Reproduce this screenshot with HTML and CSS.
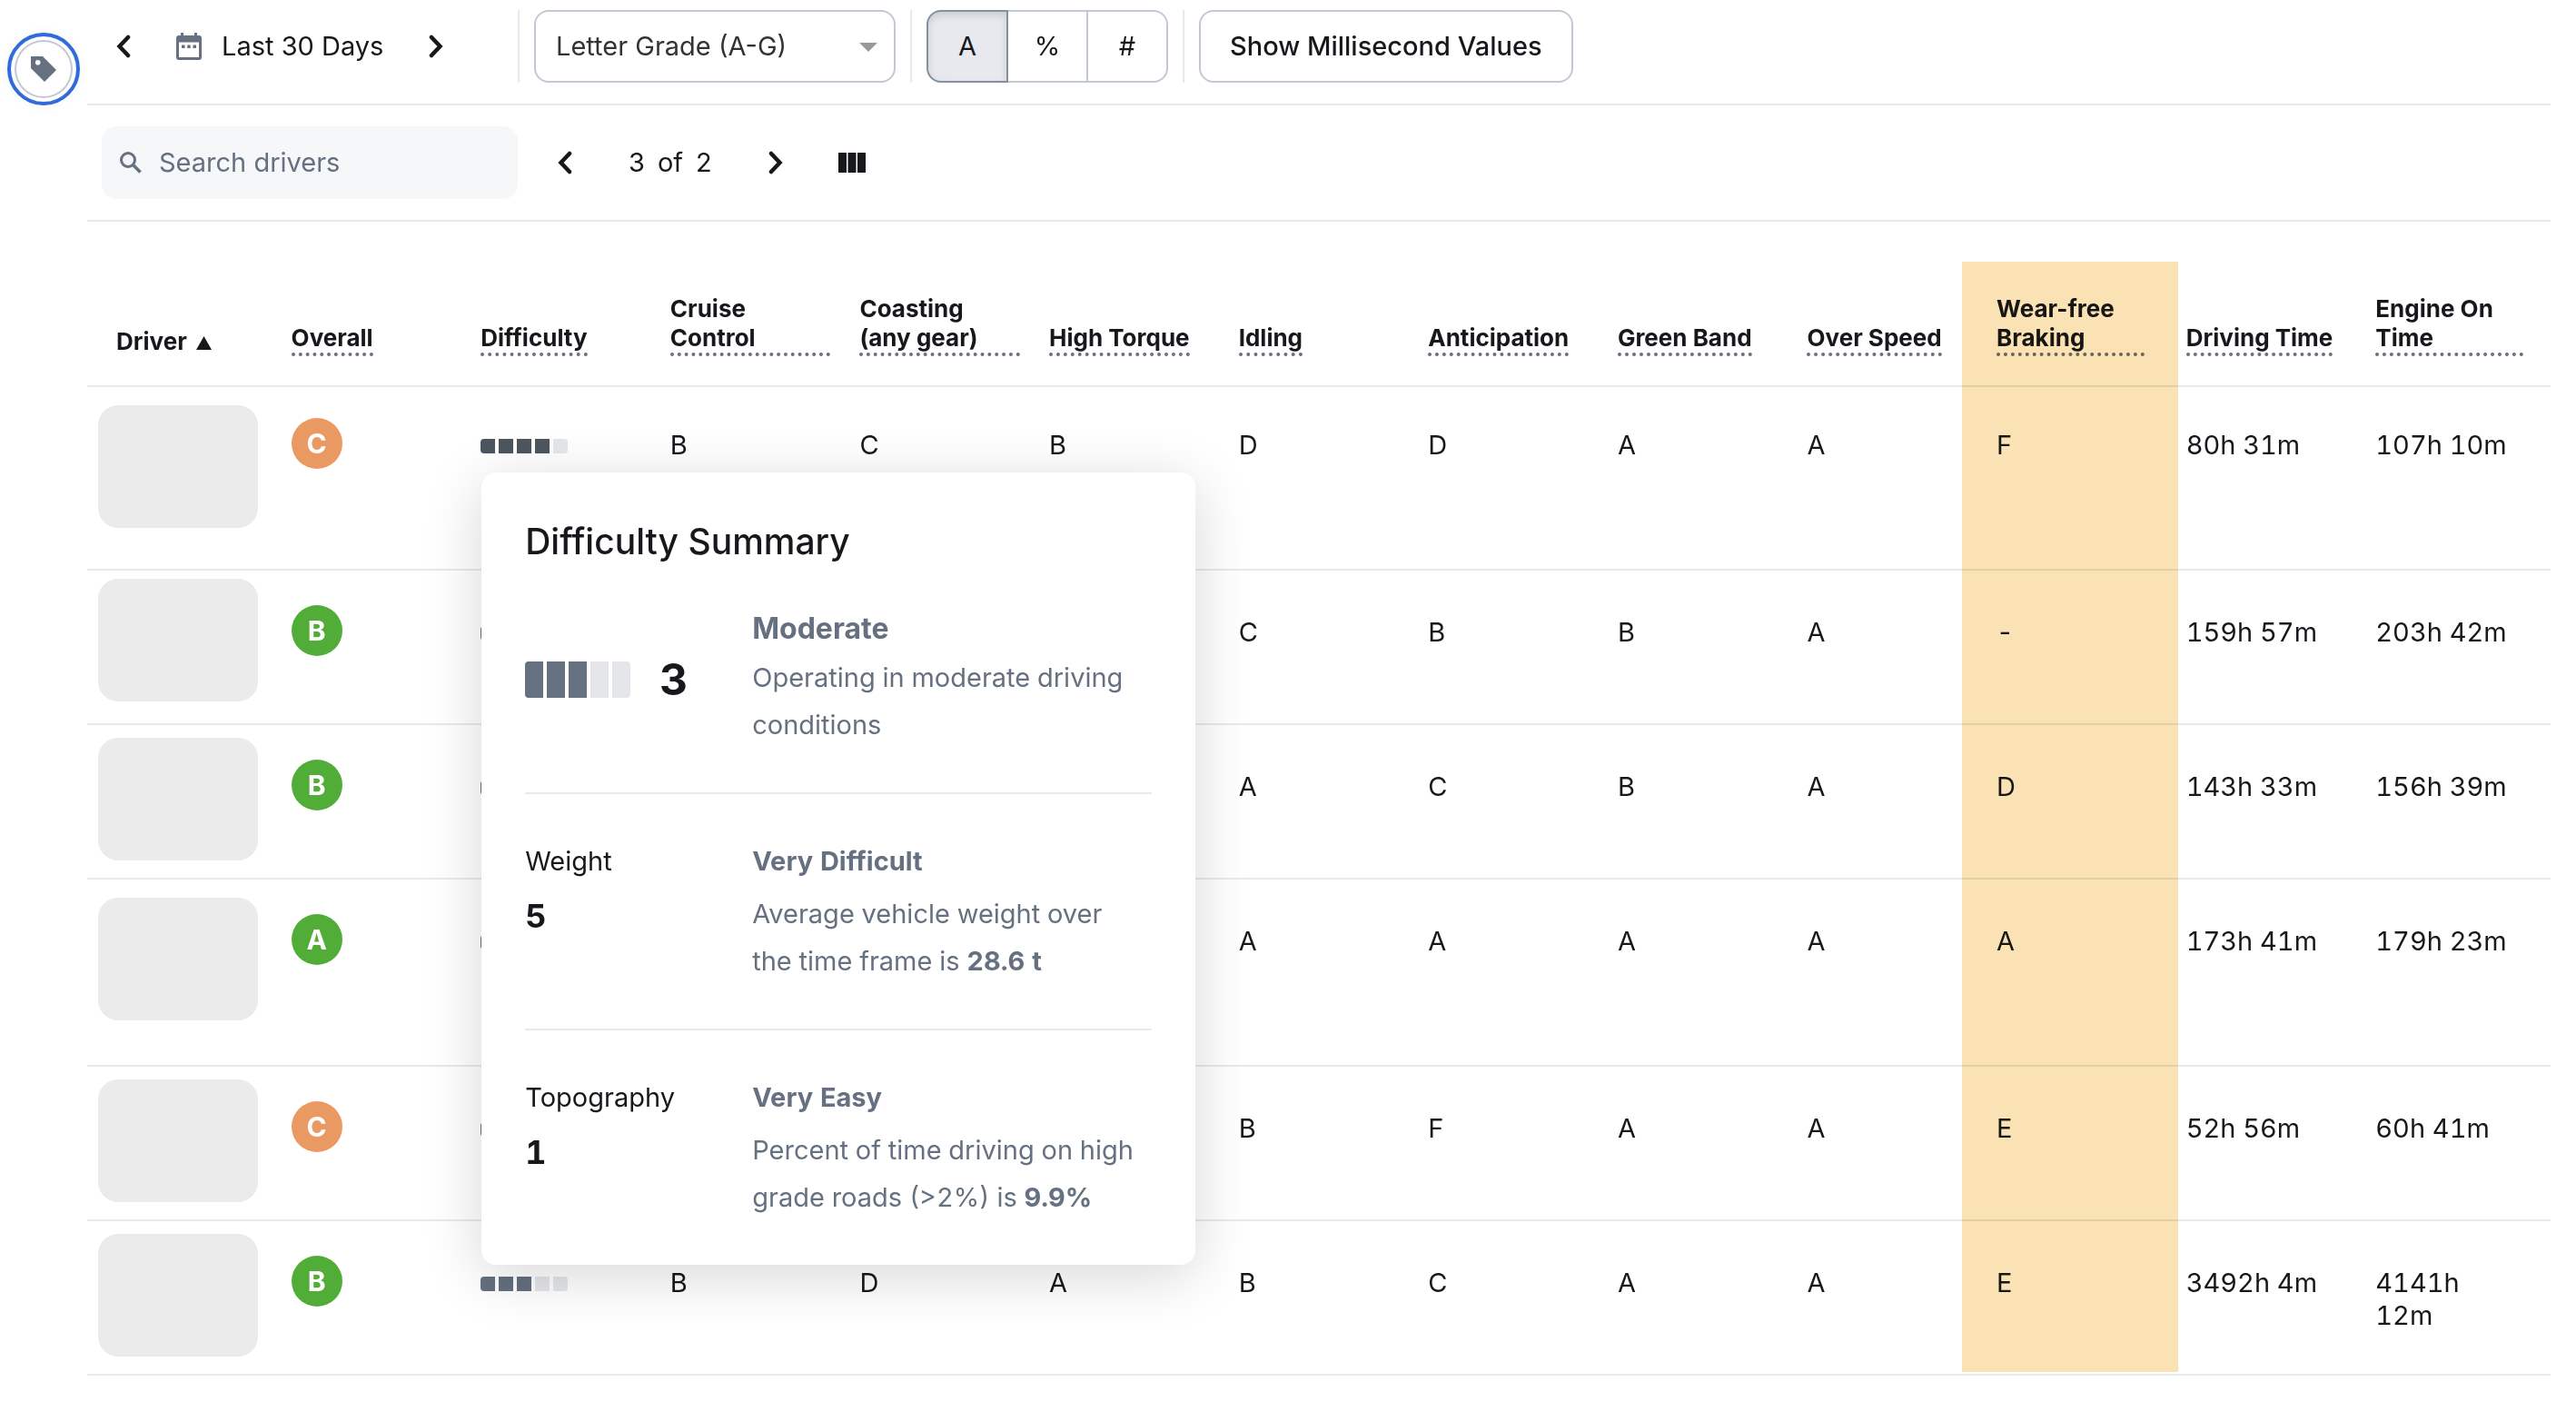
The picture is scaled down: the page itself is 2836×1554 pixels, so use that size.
FILE: index.html
```
<!DOCTYPE html>
<html lang="en">

<head>
    <meta charset="UTF-8">
    <meta name="viewport" content="width=device-width, initial-scale=1.0">
    <title>Driver Performance</title>
    <link rel="stylesheet" href="styles.css">
</head>

<body>
    <aside class="rail">
        <button class="tag-btn" type="button" aria-label="Tags">
            <svg width="28" height="28" viewBox="0 0 28 28">
                <path fill="#657080" fill-rule="evenodd" d="M0 0h13l15 15-13 13L0 13zM7.700 4a2.800 2.800 0 1 0 0 5.600 2.800 2.800 0 0 0 0-5.600z" />
            </svg>
        </button>
    </aside>

    <main class="main">
        <div class="toolbar">
            <div class="date-nav">
                <button class="icon-btn" type="button" aria-label="Previous period">
                    <svg width="16" height="26" viewBox="0 0 16 26"><path class="chevron" d="M13 3L3.500 13 13 23" /></svg>
                </button>
                <button class="date-btn" type="button">
                    <svg width="28" height="30" viewBox="0 0 28 30">
                        <path fill="#657080" fill-rule="evenodd" d="M5 0h3v3h12V0h3v3h2a3 3 0 0 1 3 3v21a3 3 0 0 1-3 3H3a3 3 0 0 1-3-3V6a3 3 0 0 1 3-3h2zM3 10.500V27h22V10.500z" />
                        <path fill="#657080" d="M6 13.500h3.500V17H6zM12.200 13.500h3.500V17h-3.500zM18.500 13.500H22V17h-3.500z" />
                    </svg>
                    Last 30 Days
                </button>
                <button class="icon-btn" type="button" aria-label="Next period">
                    <svg width="16" height="26" viewBox="0 0 16 26"><path class="chevron" d="M3 3l9.500 10L3 23" /></svg>
                </button>
            </div>
            <span class="divider"></span>
            <div class="select-box">
                <select aria-label="Score format">
                    <option>Letter Grade (A-G)</option>
                </select>
                <svg class="caret" width="20" height="10" viewBox="0 0 20 10"><path fill="#999" d="M0 0h20L10 10z" /></svg>
            </div>
            <span class="divider"></span>
            <div class="btn-group">
                <button class="active" type="button">A</button>
                <button type="button">%</button>
                <button type="button">#</button>
            </div>
            <span class="divider"></span>
            <button class="btn" type="button">Show Millisecond Values</button>
        </div>

        <div class="toolbar search-bar">
            <label class="search">
                <svg width="24" height="24" viewBox="0 0 24 24">
                    <circle cx="9" cy="9" r="7.500" fill="none" stroke="#657080" stroke-width="3" />
                    <path d="M14.500 14.500L22.500 22.500" stroke="#657080" stroke-width="3.500" />
                </svg>
                <input type="text" placeholder="Search drivers" aria-label="Search drivers">
            </label>
            <div class="pager">
                <button class="icon-btn" type="button" aria-label="Previous page">
                    <svg width="16" height="26" viewBox="0 0 16 26"><path class="chevron" d="M13 3L3.500 13 13 23" /></svg>
                </button>
                <div class="pages"><span>3</span><span>of</span><span>2</span></div>
                <button class="icon-btn" type="button" aria-label="Next page">
                    <svg width="16" height="26" viewBox="0 0 16 26"><path class="chevron" d="M3 3l9.500 10L3 23" /></svg>
                </button>
            </div>
            <button class="icon-btn" type="button" aria-label="Columns">
                <svg width="30" height="22" viewBox="0 0 30 22"><path fill="#17181c" d="M0 0h9v22H0zM10.500 0h9v22h-9zM21 0h9v22h-9z" /></svg>
            </button>
        </div>

        <div class="table-box">
            <table>
                <thead>
                    <tr>
                        <th class="driver">Driver <svg width="17" height="15" viewBox="0 0 17 15"><path fill="#17181c" d="M8.500 0L17 15H0z" /></svg></th>
                        <th><span>Overall</span></th>
                        <th><span>Difficulty</span></th>
                        <th><span>Cruise Control</span></th>
                        <th><span>Coasting (any gear)</span></th>
                        <th><span>High Torque</span></th>
                        <th><span>Idling</span></th>
                        <th><span>Anticipation</span></th>
                        <th><span>Green Band</span></th>
                        <th><span>Over Speed</span></th>
                        <th class="narrow"><span>Wear-free Braking</span></th>
                        <th class="narrow"><span>Driving Time</span></th>
                        <th class="narrow"><span>Engine On Time</span></th>
                    </tr>
                </thead>
                <tbody>
                    <tr class="tall">
                        <td class="driver"><div class="tile tile-low"></div></td>
                        <td><span class="grade orange">C</span></td>
                        <td class="difficulty">
                            <div class="bars dark"><i class="on"></i><i class="on"></i><i class="on"></i><i class="on"></i><i></i></div>
                            <div class="popover">
                                <h2>Difficulty Summary</h2>
                                <div class="summary">
                                    <div class="score">
                                        <div class="bars big"><i class="on"></i><i class="on"></i><i class="on"></i><i></i><i></i></div>
                                        <b>3</b>
                                    </div>
                                    <div>
                                        <h3>Moderate</h3>
                                        <p>Operating in moderate driving conditions</p>
                                    </div>
                                </div>
                                <div class="factor">
                                    <div>
                                        <h4>Weight</h4>
                                        <b class="value">5</b>
                                    </div>
                                    <div>
                                        <h5>Very Difficult</h5>
                                        <p>Average vehicle weight over the time frame is <b>28.6 t</b></p>
                                    </div>
                                </div>
                                <div class="factor">
                                    <div>
                                        <h4>Topography</h4>
                                        <b class="value">1</b>
                                    </div>
                                    <div>
                                        <h5>Very Easy</h5>
                                        <p>Percent of time driving on high grade roads (&gt;2%) is <b>9.9%</b></p>
                                    </div>
                                </div>
                            </div>
                        </td>
                        <td>B</td>
                        <td>C</td>
                        <td>B</td>
                        <td>D</td>
                        <td>D</td>
                        <td>A</td>
                        <td>A</td>
                        <td>F</td>
                        <td>80h 31m</td>
                        <td>107h 10m</td>
                    </tr>
                    <tr>
                        <td class="driver"><div class="tile tile-high"></div></td>
                        <td><span class="grade green">B</span></td>
                        <td><div class="bars"><i class="on"></i><i class="on"></i><i class="on"></i><i></i><i></i></div></td>
                        <td></td>
                        <td></td>
                        <td></td>
                        <td>C</td>
                        <td>B</td>
                        <td>B</td>
                        <td>A</td>
                        <td>-</td>
                        <td>159h 57m</td>
                        <td>203h 42m</td>
                    </tr>
                    <tr>
                        <td class="driver"><div class="tile"></div></td>
                        <td><span class="grade green">B</span></td>
                        <td><div class="bars"><i class="on"></i><i class="on"></i><i class="on"></i><i></i><i></i></div></td>
                        <td></td>
                        <td></td>
                        <td></td>
                        <td>A</td>
                        <td>C</td>
                        <td>B</td>
                        <td>A</td>
                        <td>D</td>
                        <td>143h 33m</td>
                        <td>156h 39m</td>
                    </tr>
                    <tr class="tall">
                        <td class="driver"><div class="tile tile-low"></div></td>
                        <td><span class="grade green">A</span></td>
                        <td><div class="bars"><i class="on"></i><i class="on"></i><i class="on"></i><i></i><i></i></div></td>
                        <td></td>
                        <td></td>
                        <td></td>
                        <td>A</td>
                        <td>A</td>
                        <td>A</td>
                        <td>A</td>
                        <td>A</td>
                        <td>173h 41m</td>
                        <td>179h 23m</td>
                    </tr>
                    <tr>
                        <td class="driver"><div class="tile"></div></td>
                        <td><span class="grade orange">C</span></td>
                        <td><div class="bars"><i class="on"></i><i class="on"></i><i class="on"></i><i></i><i></i></div></td>
                        <td></td>
                        <td></td>
                        <td></td>
                        <td>B</td>
                        <td>F</td>
                        <td>A</td>
                        <td>A</td>
                        <td>E</td>
                        <td>52h 56m</td>
                        <td>60h 41m</td>
                    </tr>
                    <tr>
                        <td class="driver"><div class="tile"></div></td>
                        <td><span class="grade green">B</span></td>
                        <td><div class="bars"><i class="on"></i><i class="on"></i><i class="on"></i><i></i><i></i></div></td>
                        <td>B</td>
                        <td>D</td>
                        <td>A</td>
                        <td>B</td>
                        <td>C</td>
                        <td>A</td>
                        <td>A</td>
                        <td>E</td>
                        <td>3492h 4m</td>
                        <td>4141h 12m</td>
                    </tr>
                </tbody>
            </table>
            <div class="highlight"></div>
        </div>
    </main>
</body>

</html>
```
FILE: styles.css
```
* {
    box-sizing: border-box;
    margin: 0;
    padding: 0;
}

body {
    display: flex;
    background: #fff;
    color: #17181c;
    font-family: Inter, "Liberation Sans", sans-serif;
    font-size: 29px;
    line-height: 36px;
}

button,
input,
select {
    font: inherit;
    color: inherit;
    background: none;
    border: none;
}

button {
    cursor: pointer;
}

svg {
    display: block;
    flex-shrink: 0;
}

.chevron {
    fill: none;
    stroke: #17181c;
    stroke-width: 4.5;
    stroke-linecap: round;
}

/* left rail */

.rail {
    flex: 0 0 96px;
    padding: 36px 8px;
}

.tag-btn {
    display: flex;
    align-items: center;
    justify-content: center;
    width: 80px;
    height: 80px;
    border: 4px solid #306bdb;
    border-radius: 50%;
    box-shadow: inset 0 0 0 4px #fff, inset 0 0 0 6px #c3c9d3, 0 0 16px rgba(0, 0, 0, 0.04);
}

.main {
    flex: 1;
    min-width: 0;
    margin-right: 28px;
}

/* toolbars */

.toolbar {
    display: flex;
    align-items: center;
    gap: 16px;
    padding: 11px 0 23px;
    border-bottom: 2px solid #e8e9ee;
}

.date-nav {
    display: flex;
    align-items: center;
    gap: 34px;
    width: 474px;
    margin-right: -16px;
    padding-left: 16px;
}

.date-btn {
    display: flex;
    align-items: center;
    gap: 22px;
    white-space: nowrap;
}

.icon-btn {
    display: flex;
    align-items: center;
    justify-content: center;
    width: 48px;
    height: 48px;
}

.divider {
    width: 2px;
    height: 80px;
    background: #e8e9ee;
}

.select-box {
    position: relative;
    width: 398px;
}

.select-box select {
    appearance: none;
    width: 100%;
    height: 80px;
    padding: 0 22px;
    border: 2px solid #c3c9d3;
    border-radius: 16px;
    color: #333;
}

.caret {
    position: absolute;
    top: 36px;
    right: 20px;
    pointer-events: none;
}

.btn,
.btn-group button {
    height: 80px;
    border: 2px solid #c3c9d3;
}

.btn {
    padding: 0 32px;
    border-radius: 16px;
    font-weight: 500;
}

.btn-group {
    display: flex;
}

.btn-group button {
    width: 90px;
    margin-left: -2px;
}

.btn-group button:first-child {
    margin-left: 0;
    border-radius: 16px 0 0 16px;
}

.btn-group button:last-child {
    border-radius: 0 16px 16px 0;
}

.btn-group .active {
    z-index: 1;
    background: #e8e9ee;
    border-color: #8290a0;
    box-shadow: inset 0 4px 8px rgba(0, 0, 0, 0.12);
}

.search-bar {
    gap: 28px;
    padding: 23px 0 23px 16px;
}

.search {
    display: flex;
    align-items: center;
    gap: 19px;
    width: 458px;
    height: 80px;
    padding: 0 20px;
    border-radius: 16px;
    background: #f5f7f9;
}

.search input {
    flex: 1;
    min-width: 0;
    outline: none;
}

.search input::placeholder {
    color: #657080;
}

.pager {
    display: flex;
    align-items: center;
    gap: 46px;
    margin-right: 8px;
}

.pages {
    display: flex;
    gap: 14px;
}

/* table */

.table-box {
    position: relative;
}

table {
    width: 100%;
    table-layout: fixed;
    border-collapse: separate;
    border-spacing: 0;
}

th {
    height: 182px;
    padding: 0 16px 32px;
    border-bottom: 2px solid #e8e9ee;
    font-size: 26px;
    line-height: 32px;
    text-align: left;
    vertical-align: bottom;
}

th span {
    display: block;
    width: fit-content;
    border-bottom: 4px dotted #657080;
}

th.driver {
    padding-left: 32px;
}

th.narrow {
    padding-right: 30px;
}

th.driver svg {
    display: inline-block;
    margin-left: 4px;
}

tbody tr {
    --cell-top: 50px;
}

tbody tr:first-child {
    --cell-top: 46px;
}

td {
    height: 170px;
    padding: var(--cell-top) 32px 0 16px;
    border-bottom: 2px solid #e8e9ee;
    font-variant-numeric: tabular-nums;
    vertical-align: top;
}

.tall td {
    height: calc(156px + var(--cell-top));
}

td.driver {
    padding: 14px 12px 0;
}

.tile {
    width: 176px;
    height: 135px;
    border-radius: 22px;
    background: #ebebeb;
}

.tile-low {
    margin-top: 6px;
}

.tile-high {
    margin-top: -5px;
}

.grade {
    display: flex;
    align-items: center;
    justify-content: center;
    width: 56px;
    height: 56px;
    margin-top: -12px;
    border-radius: 50%;
    color: #fff;
    font-size: 30px;
    font-weight: 700;
}

.green {
    background: #51ad38;
}

.orange {
    background: #eb9962;
}

.bars {
    display: flex;
    gap: 4px;
    margin-top: 11px;
}

.bars i {
    width: 16px;
    height: 16px;
    background: #e4e6ea;
}

.bars i:first-child {
    border-radius: 4px 0 0 4px;
}

.bars i:last-child {
    border-radius: 0 4px 4px 0;
}

.bars .on {
    background: #657080;
}

.dark .on {
    background: #4d555f;
}

.highlight {
    position: absolute;
    top: 44px;
    bottom: 4px;
    left: 76.1%;
    width: 8.8%;
    background: #fbe2b4;
    mix-blend-mode: multiply;
}

/* difficulty popover */

.difficulty {
    position: relative;
}

.popover {
    position: absolute;
    z-index: 2;
    top: 94px;
    left: 17px;
    width: 786px;
    padding: 52px 48px 0;
    border-radius: 16px;
    background: #fff;
    box-shadow: 0 12px 64px rgba(0, 0, 0, 0.16);
}

.popover h2 {
    margin-bottom: 52px;
    font-size: 39px;
    font-weight: 500;
    line-height: 48px;
}

.popover h3,
.popover h4,
.popover h5 {
    margin-bottom: 12px;
    line-height: 40px;
}

.popover h3 {
    color: #657080;
    font-size: 32px;
    margin-bottom: 8px;
}

.popover h4 {
    font-size: 29px;
    font-weight: 400;
}

.popover h5 {
    color: #657080;
    font-size: 29px;
}

.popover p {
    padding-right: 12px;
    color: #657080;
    line-height: 52px;
}

.summary,
.factor {
    display: grid;
    grid-template-columns: 250px 1fr;
    padding-bottom: 48px;
}

.factor {
    padding-top: 54px;
    border-top: 2px solid #e8e9ee;
}

.score {
    display: flex;
    align-items: center;
    gap: 32px;
    font-size: 48px;
}

.big {
    margin-top: 0;
}

.big i {
    width: 20px;
    height: 40px;
}

.value {
    display: block;
    font-size: 36px;
    line-height: 56px;
}
```
